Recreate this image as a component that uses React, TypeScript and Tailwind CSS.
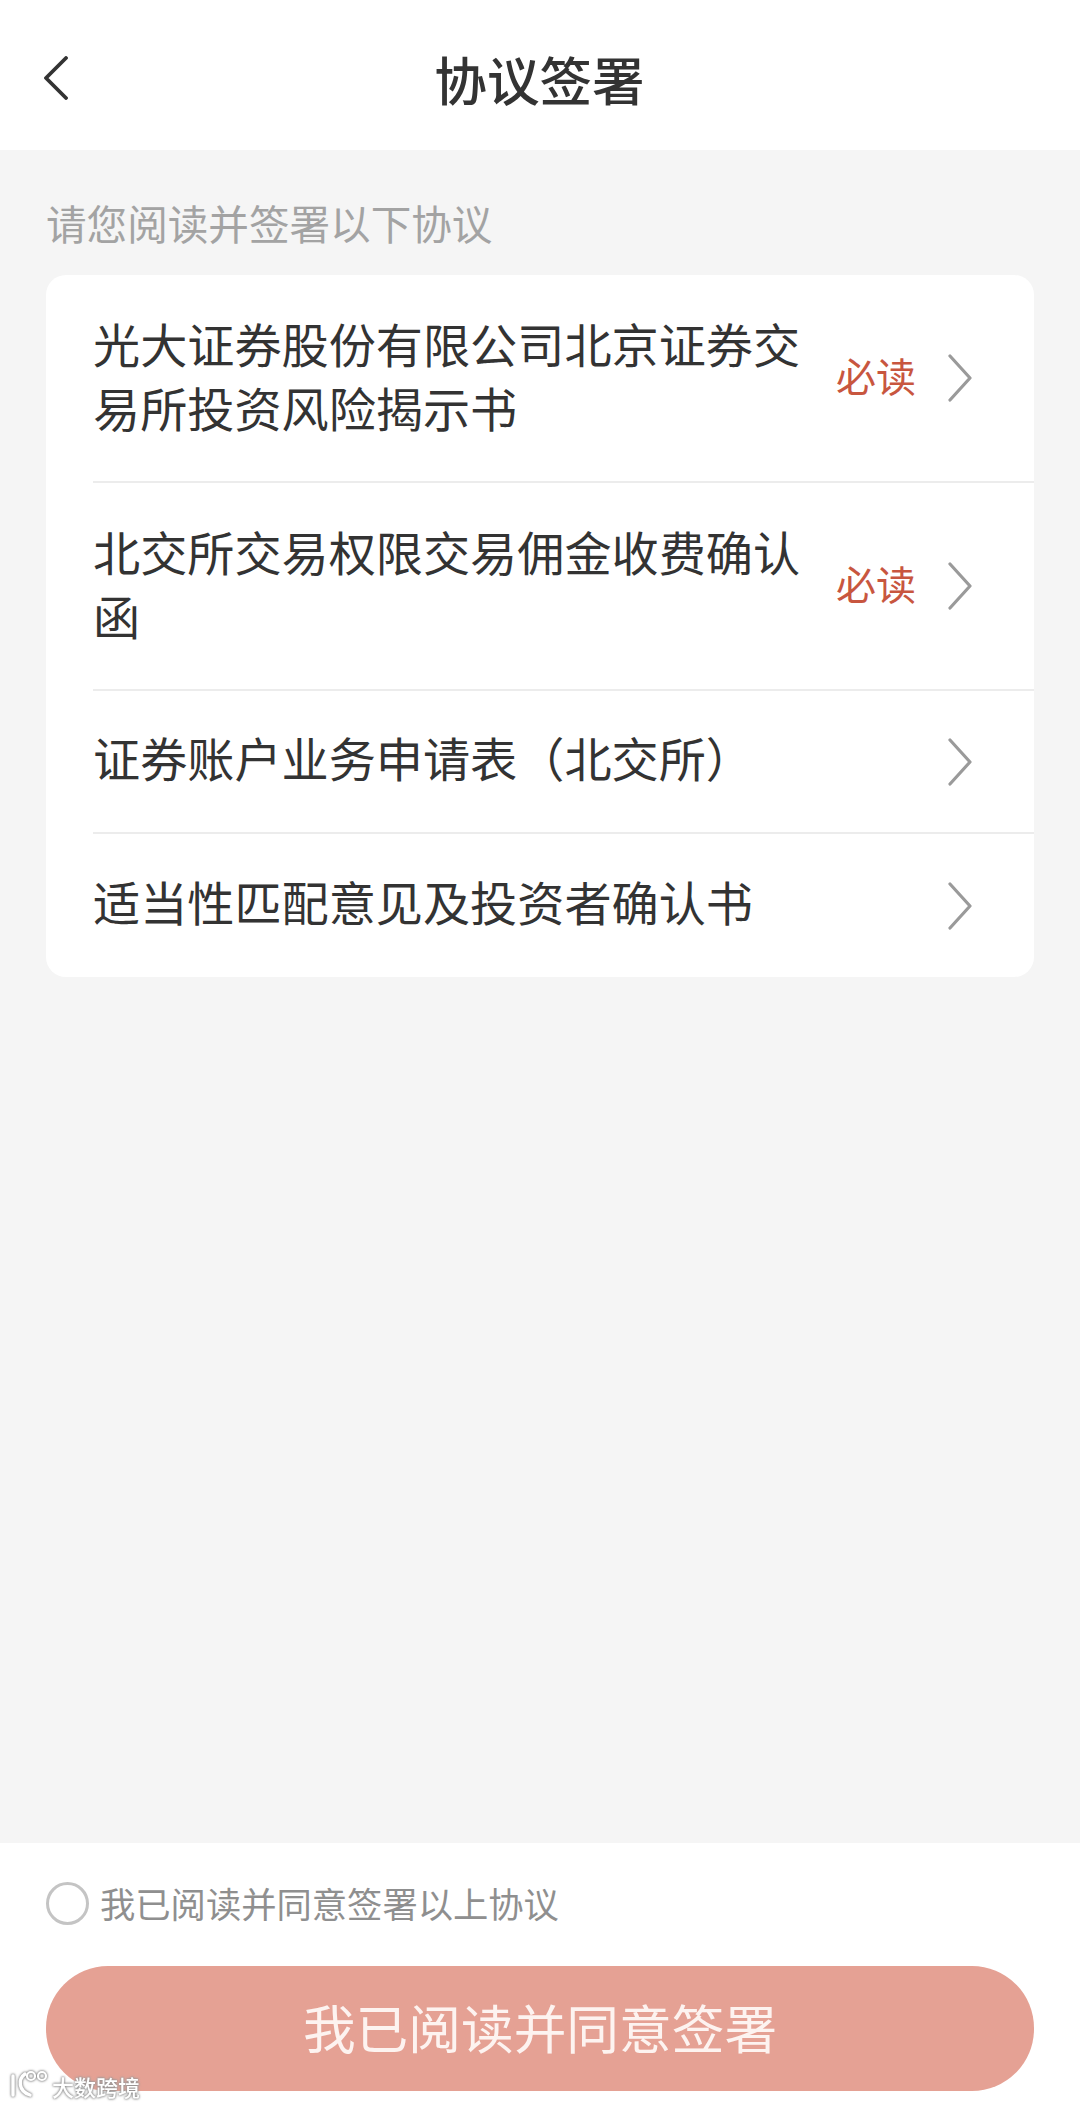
const font = "font-['Noto_Sans_CJK_SC','Noto_Sans',sans-serif]";

type Row = {
  title: string;
  required?: boolean;
  tall?: boolean;
};

const rows: Row[] = [
  { title: "光大证券股份有限公司北京证券交易所投资风险揭示书", required: true, tall: true },
  { title: "北交所交易权限交易佣金收费确认函", required: true, tall: true },
  { title: "证券账户业务申请表（北交所）" },
  { title: "适当性匹配意见及投资者确认书" },
];

function Chevron({ className }: { className: string }) {
  return (
    <svg className={className} viewBox="0 0 24 48" fill="none" stroke="currentColor" strokeWidth="3.2" strokeLinecap="round" strokeLinejoin="round">
      <path d="M2 2 L22 24 L2 46" />
    </svg>
  );
}

function AgreementRow({ row, last }: { row: Row; last: boolean }) {
  return (
    <div className={`flex items-center pl-[47px] ${row.tall ? "h-[208px]" : "h-[143px]"}`}>
      <div className={`flex items-center h-full w-full pr-[62px] ${last ? "" : "border-b-2 border-[#ececec]"}`}>
        <p className={`w-[714px] text-[47.15px] leading-[64px] text-[#333333] ${row.tall ? "-mt-[6px]" : "-mt-[9px]"}`}>{row.title}</p>
        {row.required && <span className="ml-[29px] text-[40px] leading-[50px] text-[#c8563f] -mt-[6px]">必读</span>}
        <Chevron className="ml-auto w-[24px] h-[48px] text-[#9a9a9a]" />
      </div>
    </div>
  );
}

export default function App() {
  return (
    <div className={`relative flex flex-col w-[1080px] h-[2105px] bg-[#f5f5f5] overflow-hidden ${font}`}>
      <header className="grid grid-cols-3 items-center h-[150px] shrink-0 bg-white px-[44px]">
        <svg className="w-[24px] h-[44px] text-[#333333] mt-[5px]" viewBox="0 0 24 44" fill="none" stroke="currentColor" strokeWidth="3.8" strokeLinecap="round" strokeLinejoin="round">
          <path d="M22 2 L2 22 L22 42" />
        </svg>
        <h1 className="text-center text-[52.6px] leading-[60px] font-medium text-[#333333] whitespace-nowrap mt-[6px] -ml-[1px]">协议签署</h1>
      </header>

      <main className="flex-1 px-[46px]">
        <p className="pt-[48px] pb-[27px] text-[40.6px] leading-[50px] text-[#a3a3a3]">请您阅读并签署以下协议</p>
        <section className="rounded-[20px] bg-white overflow-hidden">
          {rows.map((row, i) => (
            <AgreementRow key={row.title} row={row} last={i === rows.length - 1} />
          ))}
        </section>
      </main>

      <footer className="shrink-0 h-[262px] bg-white px-[46px] pt-[39px]">
        <div className="flex items-center h-[43px]">
          <span className="w-[43px] h-[43px] rounded-full border-[3px] border-[#c4c4c4]" />
          <span className="ml-[11px] text-[35.3px] leading-[43px] text-[#8f8f8f] -mt-[3px]">我已阅读并同意签署以上协议</span>
        </div>
        <button className={`mt-[41px] w-full h-[125px] rounded-[62px] bg-[#e5a194] text-[52.7px] leading-[60px] text-[#fdf3f0] pb-[6px] ${font}`}>
          我已阅读并同意签署
        </button>
      </footer>

      {/* watermark over the button corner */}
      <div className="absolute left-[10px] bottom-[6px] flex items-center gap-[4px] text-white [filter:drop-shadow(0_0_1px_#888888)_drop-shadow(0_0_1px_#aaaaaa)]">
        <svg className="w-[38px] h-[30px] -mt-[6px]" viewBox="0 0 38 30" fill="none" stroke="currentColor" strokeWidth="3.4" strokeLinecap="round">
          <path d="M3 8 V27" />
          <path d="M15 6 C8 11 8 23 20 27" />
          <circle cx="21" cy="8" r="4" strokeWidth="2.2" />
          <circle cx="32" cy="8" r="4" strokeWidth="2.2" />
        </svg>
        <span className="text-[22px] leading-[26px] font-medium">大数跨境</span>
      </div>
    </div>
  );
}
